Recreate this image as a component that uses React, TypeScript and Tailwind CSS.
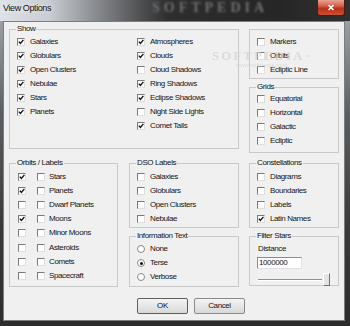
import React from 'react';

const ui = "font-['Liberation_Sans',Arial,sans-serif] text-[8px] leading-none tracking-[-0.4px] text-[#141414]";

function Box({ checked }: { checked?: boolean }) {
  return (
    <span className="relative h-[8px] w-[8px] shrink-0 border border-t-[#7a7a7a] border-l-[#7a7a7a] border-r-[#dedede] border-b-[#dedede] bg-white">
      {checked && (
        <svg viewBox="0 0 6 6" className="absolute left-0 top-0 h-[6px] w-[6px]">
          <path d="M0.8 2.6 L2.4 4.4 L5.4 0.9" fill="none" stroke="#111" strokeWidth="1.4" />
        </svg>
      )}
    </span>
  );
}

function Check({ label, checked }: { label: string; checked?: boolean }) {
  return (
    <div className="flex h-[14px] items-center">
      <Box checked={checked} />
      <span className="ml-[5px]">{label}</span>
    </div>
  );
}

function Radio({ label, on }: { label: string; on?: boolean }) {
  return (
    <div className="flex h-[14px] items-center">
      <span className="flex h-[8px] w-[8px] shrink-0 items-center justify-center rounded-full border border-[#8a8a8a] bg-white">
        {on && <span className="h-[3px] w-[3px] rounded-full bg-[#111]" />}
      </span>
      <span className="ml-[5px]">{label}</span>
    </div>
  );
}

function Group({
  title,
  className,
  children,
}: {
  title?: string;
  className: string;
  children: React.ReactNode;
}) {
  return (
    <div className={`relative border border-[#c9c9c9] pl-[7px] ${className}`}>
      {title && (
        <span className="absolute left-[6px] top-[-5px] bg-[#f0f0f0] px-px">{title}</span>
      )}
      {children}
    </div>
  );
}

export default function App() {
  return (
    <div className="flex h-[326px] w-[350px] flex-col bg-[linear-gradient(to_bottom,#a9aeb3,#5b5e61_35%,#3a3a3a_70%,#2c2c2c)]">
      {/* title bar */}
      <div className="relative flex h-[21px] shrink-0 items-start bg-[linear-gradient(to_right,#dfe2e6_0%,#c9cdd2_14%,#6a6c6f_34%,#2e2e2e_48%,#262626_80%,#303030_100%)]">
        <span className="mt-[4px] pl-[3px] font-['Liberation_Sans',Arial,sans-serif] text-[9px] leading-none tracking-[-0.4px] text-[#111] [text-shadow:0_0_4px_#ffffff]">
          View Options
        </span>
        <span className="absolute left-[152px] top-[1px] font-['Liberation_Serif',serif] text-[14px] font-bold leading-none tracking-[4px] text-[#707070] blur-[0.8px]">
          SOFTPEDIA
        </span>
        <div className="ml-auto mr-[5px] flex h-[16px] w-[28px] items-center justify-center rounded-b-[3px] border border-t-0 border-[#4a1a12] bg-[linear-gradient(to_bottom,#e8a596,#d0543c_45%,#b8301a_55%,#c9502f)]">
          <svg viewBox="0 0 8 7" className="h-[7px] w-[8px]">
            <path d="M1.5 1 L6.5 6 M6.5 1 L1.5 6" stroke="#fff" strokeWidth="1.6" />
          </svg>
        </div>
      </div>

      <div className="flex min-h-0 flex-1">
        <div className="w-[3px] shrink-0" />
        {/* client area */}
        <div className={`relative h-[300px] w-[342px] border border-[#7d7d7d] bg-[#f0f0f0] pl-[5px] pt-[7px] ${ui}`}>
          <div className="flex gap-[10px]">
            <Group title="Show" className="h-[120px] w-[230px] pt-[5px]">
              <div className="grid grid-cols-[120px_1fr]">
                <div>
                  <Check label="Galaxies" checked />
                  <Check label="Globulars" checked />
                  <Check label="Open Clusters" checked />
                  <Check label="Nebulae" checked />
                  <Check label="Stars" checked />
                  <Check label="Planets" checked />
                </div>
                <div>
                  <Check label="Atmospheres" checked />
                  <Check label="Clouds" checked />
                  <Check label="Cloud Shadows" />
                  <Check label="Ring Shadows" checked />
                  <Check label="Eclipse Shadows" checked />
                  <Check label="Night Side Lights" />
                  <Check label="Comet Tails" checked />
                </div>
              </div>
            </Group>
            <div className="flex flex-col gap-[8px]">
              <Group className="h-[50px] w-[90px] pt-[5px]">
                <Check label="Markers" />
                <Check label="Orbits" />
                <Check label="Ecliptic Line" />
              </Group>
              <Group title="Grids" className="h-[66px] w-[90px] pt-[4px]">
                <Check label="Equatorial" />
                <Check label="Horizontal" />
                <Check label="Galactic" />
                <Check label="Ecliptic" />
              </Group>
            </div>
          </div>

          <div className="mt-[10px] flex gap-[10px]">
            <Group title="Orbits / Labels" className="h-[124px] w-[109px] pt-[6px]">
              {[
                ['Stars', true],
                ['Planets', true],
                ['Dwarf Planets', false],
                ['Moons', true],
                ['Minor Moons', false],
                ['Asteroids', false],
                ['Comets', false],
                ['Spacecraft', false],
              ].map(([name, orbit]) => (
                <div key={name as string} className="flex h-[14.1px] items-center pl-px">
                  <Box checked={orbit as boolean} />
                  <span className="ml-[11px]" />
                  <Box />
                  <span className="ml-[4px]">{name as string}</span>
                </div>
              ))}
            </Group>
            <div className="flex flex-col gap-[8px] pl-px">
              <Group title="DSO Labels" className="h-[65px] w-[110px] pt-[6px]">
                <Check label="Galaxies" />
                <Check label="Globulars" />
                <Check label="Open Clusters" />
                <Check label="Nebulae" />
              </Group>
              <Group title="Information Text" className="h-[51px] w-[110px] pt-[5px]">
                <Radio label="None" />
                <Radio label="Terse" on />
                <Radio label="Verbose" />
              </Group>
            </div>
            <div className="flex flex-col gap-[8px]">
              <Group title="Constellations" className="h-[65px] w-[90px] pt-[6px]">
                <Check label="Diagrams" />
                <Check label="Boundaries" />
                <Check label="Labels" />
                <Check label="Latin Names" checked />
              </Group>
              <Group title="Filter Stars" className="h-[50px] w-[90px] pl-[8px] pt-[8px]">
                <div className="h-[9px]">Distance</div>
                <div className="-ml-px mt-[3px] flex h-[12px] w-[45px] items-center border border-t-[#8c8c8c] border-l-[#8c8c8c] border-r-[#e2e2e2] border-b-[#e2e2e2] bg-white pl-px">
                  1000000
                </div>
                <div className="mt-[4px] flex h-[13px] w-[72px] items-center gap-[1px]">
                  <div className="h-[2px] flex-1 border-t border-t-[#8f8f8f] border-b border-b-white" />
                  <div className="h-[13px] w-[7px] border border-t-white border-l-white border-r-[#707070] border-b-[#707070] bg-[#e4e4e4]" />
                </div>
              </Group>
            </div>
          </div>

          <div className="ml-[128px] mt-[11px] flex gap-[6px]">
            <button className="flex h-[16px] w-[51px] items-center justify-center rounded-[2px] border border-[#5e5e5e] bg-[linear-gradient(to_bottom,#f4f4f4,#e6e6e6_50%,#d8d8d8)]">
              OK
            </button>
            <button className="flex h-[16px] w-[51px] items-center justify-center rounded-[2px] border border-[#8a8a8a] bg-[linear-gradient(to_bottom,#f4f4f4,#e6e6e6_50%,#d8d8d8)]">
              Cancel
            </button>
          </div>

          {/* watermark */}
          <div className="pointer-events-none absolute left-[208px] top-[27px] flex flex-col items-center opacity-70">
            <span className="font-['Liberation_Serif',serif] text-[13px] font-bold tracking-[2px] text-[#d2d2d2]">
              SOFTPEDIA<sup className="text-[5px]">™</sup>
            </span>
            <span className="text-[6px] tracking-[0px] text-[#d0d0d0]">www.softpedia.com</span>
          </div>
        </div>
        <div className="w-[5px] shrink-0" />
      </div>
      <div className="h-[4px] shrink-0" />
    </div>
  );
}
